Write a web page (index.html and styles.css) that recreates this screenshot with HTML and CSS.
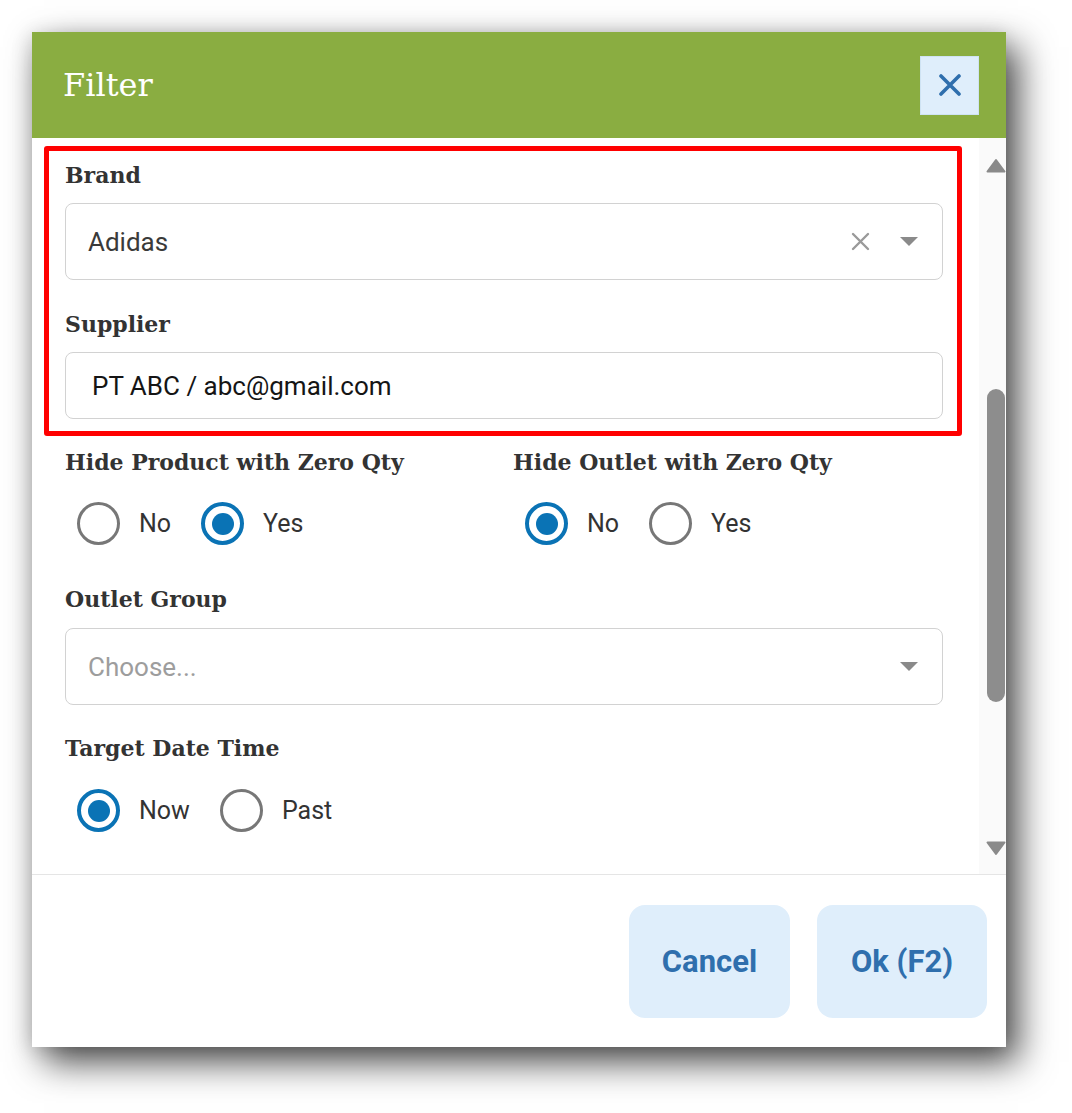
FILE: index.html
```html
<html>
    <head>
        <title>Filter</title>
        <link rel="stylesheet" href="styles.css">
    </head>
    <body>
        <div class="dialog">
            <div class="dialog-header">
                <h2 class="dialog-title">Filter</h2>
                <button class="close-btn">
                    <svg width="22" height="22" viewBox="0 0 22 22"><path d="M2 2L20 20M20 2L2 20" stroke="#2f6fad" stroke-width="3.6" stroke-linecap="round"/></svg>
                </button>
            </div>
            <div class="dialog-body">
                <div class="body-content">
                    <div class="highlight">
                        <div class="field-label">Brand</div>
                        <div class="select">
                            <span class="select-value">Adidas</span>
                            <svg class="clear-icon" width="19" height="19" viewBox="0 0 19 19"><path d="M2 2L17 17M17 2L2 17" stroke="#9a9a9a" stroke-width="2.4" stroke-linecap="round"/></svg>
                            <svg class="caret" width="20" height="11" viewBox="0 0 20 11"><path d="M1 1H19L10 10Z" fill="#8a8a8a"/></svg>
                        </div>
                        <div class="field-label gap-top">Supplier</div>
                        <div class="text-input">PT ABC / abc@gmail.com</div>
                    </div>

                    <div class="two-col">
                        <div>
                            <div class="field-label">Hide Product with Zero Qty</div>
                            <div class="radio-group">
                                <label class="radio"><span class="circle"></span>No</label>
                                <label class="radio"><span class="circle checked"></span>Yes</label>
                            </div>
                        </div>
                        <div>
                            <div class="field-label">Hide Outlet with Zero Qty</div>
                            <div class="radio-group">
                                <label class="radio"><span class="circle checked"></span>No</label>
                                <label class="radio"><span class="circle"></span>Yes</label>
                            </div>
                        </div>
                    </div>

                    <div class="field-label section-top">Outlet Group</div>
                    <div class="select">
                        <span class="select-value placeholder">Choose...</span>
                        <svg class="caret" width="20" height="11" viewBox="0 0 20 11"><path d="M1 1H19L10 10Z" fill="#8a8a8a"/></svg>
                    </div>

                    <div class="field-label date-top">Target Date Time</div>
                    <div class="radio-group">
                        <label class="radio"><span class="circle checked"></span>Now</label>
                        <label class="radio"><span class="circle"></span>Past</label>
                    </div>
                </div>
                <div class="scrollbar">
                    <svg class="arrow" width="20" height="16" viewBox="0 0 20 16"><path d="M10 2L18.5 13.5H1.5Z" fill="#8a8a8a" stroke="#8a8a8a" stroke-width="2" stroke-linejoin="round"/></svg>
                    <div class="thumb"></div>
                    <svg class="arrow down" width="20" height="16" viewBox="0 0 20 16"><path d="M1.5 2.5H18.5L10 14Z" fill="#8a8a8a" stroke="#8a8a8a" stroke-width="2" stroke-linejoin="round"/></svg>
                </div>
            </div>
            <div class="dialog-footer">
                <button class="btn">Cancel</button>
                <button class="btn btn-ok">Ok (F2)</button>
            </div>
        </div>
    </body>
</html>
```

FILE: styles.css
```css
body {
    margin: 0;
    background: #ffffff;
    font-family: Roboto, "Liberation Sans", sans-serif;
}
.dialog {
    margin: 32px 0 0 32px;
    width: 974px;
    height: 1015px;
    background: #ffffff;
    display: flex;
    flex-direction: column;
    box-shadow: 12px 15px 34px rgba(0, 0, 0, 0.72), -3px 2px 18px rgba(0, 0, 0, 0.12);
}
.dialog-header {
    height: 106px;
    background: #8aad41;
    display: flex;
    align-items: center;
    justify-content: space-between;
    padding: 0 27px 0 31px;
    flex-shrink: 0;
}
.dialog-title {
    margin: 0;
    color: #ffffff;
    font-family: "DejaVu Serif", serif;
    font-weight: normal;
    font-size: 32px;
}
.close-btn {
    width: 59px;
    height: 59px;
    border: 1px solid #cfe3f3;
    background: #dfeefb;
    display: flex;
    align-items: center;
    justify-content: center;
    padding: 0;
}
.dialog-body {
    height: 736px;
    display: flex;
    flex-shrink: 0;
}
.body-content {
    flex: 1;
    padding: 0 36px 0 33px;
    overflow: hidden;
}
.scrollbar {
    width: 27px;
    background: #fafafa;
    display: flex;
    flex-direction: column;
}
.arrow {
    margin: 20px 0 0 7px;
}
.arrow.down {
    margin-top: 138px;
}
.thumb {
    margin: 215px 0 0 8px;
    width: 18px;
    height: 313px;
    border-radius: 9px;
    background: #8d8d8d;
}
.highlight {
    margin: 8px -19px 0 -21px;
    border: 5px solid #ff0000;
    border-radius: 3px;
    padding: 10px 14px 12px 16px;
}
.field-label {
    font-family: "DejaVu Serif", serif;
    font-weight: bold;
    font-size: 22px;
    line-height: 28px;
    color: #333333;
    margin-bottom: 14px;
    white-space: nowrap;
}
.gap-top {
    margin-top: 30px;
}
.section-top {
    margin-top: 40px;
    margin-bottom: 15px;
}
.date-top {
    margin-top: 29px;
    margin-bottom: 27px;
}
.select {
    height: 77px;
    box-sizing: border-box;
    border: 1px solid #d2d2d2;
    border-radius: 8px;
    display: flex;
    align-items: center;
    padding: 0 23px 0 22px;
}
.select-value {
    flex: 1;
    font-size: 26px;
    color: #3a3a3a;
}
.placeholder {
    color: #9d9d9d;
}
.clear-icon {
    margin-right: 29px;
}
.text-input {
    height: 67px;
    box-sizing: border-box;
    border: 1px solid #d2d2d2;
    border-radius: 8px;
    display: flex;
    align-items: center;
    padding-left: 26px;
    font-size: 26px;
    color: #151515;
}
.two-col {
    display: grid;
    grid-template-columns: 1fr 1fr;
    column-gap: 18px;
    margin-top: 12px;
}
.two-col .field-label {
    margin-bottom: 26px;
}
.radio-group {
    display: flex;
    padding-left: 12px;
    gap: 30px;
}
.radio {
    display: flex;
    align-items: center;
    gap: 19px;
    font-size: 25px;
    color: #333333;
}
.circle {
    width: 43px;
    height: 43px;
    box-sizing: border-box;
    border: 3px solid #777777;
    border-radius: 50%;
    display: flex;
    align-items: center;
    justify-content: center;
}
.circle.checked {
    border: 4px solid #0a73b5;
}
.circle.checked::after {
    content: "";
    width: 22px;
    height: 22px;
    border-radius: 50%;
    background: #0a73b5;
}
.dialog-footer {
    flex: 1;
    border-top: 1px solid #e5e5e5;
    display: flex;
    justify-content: flex-end;
    align-items: flex-start;
    gap: 27px;
    padding: 30px 19px 0 0;
}
.btn {
    width: 161px;
    height: 113px;
    border: none;
    border-radius: 16px;
    background: #dfeefb;
    color: #2f6fad;
    font-family: Roboto, "Liberation Sans", sans-serif;
    font-weight: bold;
    font-size: 31px;
}
.btn-ok {
    width: 170px;
}
```
